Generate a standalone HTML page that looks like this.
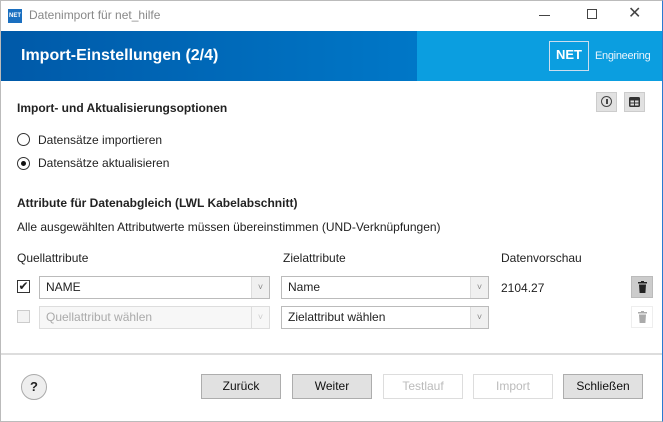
<!DOCTYPE html><html><head><meta charset="utf-8"><style>
*{box-sizing:border-box;margin:0;padding:0}
body{width:663px;height:422px;overflow:hidden;background:#fff;font-family:"Liberation Sans",sans-serif;font-size:12px;color:#222;position:relative}
.a{position:absolute}
.btn{position:absolute;top:374px;width:80px;height:25px;border:1px solid #adadad;background:#e1e1e1;text-align:center;line-height:23px;font-size:12px;color:#111}
.dis{background:#fff;border-color:#ddd;color:#bbb}
.sel{position:absolute;height:23px;border:1px solid #bbb;background:#fff;padding-left:6px;line-height:21px;font-size:12px}
.sel .ar{position:absolute;right:0;top:0;width:18px;height:21px;border-left:1px solid #ddd;background:#f0f0f0;color:#888;font-size:9px;text-align:center;line-height:21px}
</style></head><body>
<div class="a" style="left:0;top:0;width:663px;height:422px;border:1px solid #bbb;border-right:1px solid #2a7ad0"></div>
<div class="a" style="left:8px;top:9px;width:14px;height:14px;background:#1a6fc0;color:#fff;font-size:6px;font-weight:bold;line-height:14px;text-align:center">NET</div>
<div class="a" style="left:29px;top:8px;font-size:12px;color:#888">Datenimport für net_hilfe</div>
<div class="a" style="left:539px;top:15px;width:11px;height:1px;background:#444"></div>
<div class="a" style="left:587px;top:9px;width:10px;height:10px;border:1px solid #444"></div>
<div class="a" style="left:628px;top:3px;font-size:16px;color:#444">✕</div>
<div class="a" style="left:1px;top:31px;width:661px;height:50px;background:linear-gradient(90deg,#0059a8,#0076c6 60%,#0088d4)"></div>
<div class="a" style="left:417px;top:31px;width:245px;height:50px;background:#0b9ee0"></div>
<div class="a" style="left:549px;top:41px;width:40px;height:30px;border:1px solid #cde;color:#fff;font-weight:bold;font-size:13px;text-align:center;line-height:26px">NET</div>
<div class="a" style="left:595px;top:50px;color:#e8f4fc;font-size:11px;letter-spacing:-0.3px">Engineering</div>
<div class="a" style="left:21px;top:47px;color:#fff;font-size:16px;font-weight:bold">Import-Einstellungen (2/4)</div>
<div class="a" style="left:17px;top:101px;font-weight:bold;font-size:12px">Import- und Aktualisierungsoptionen</div>
<div class="a" style="left:596px;top:92px;width:21px;height:20px;background:#e1e1e1;border:1px solid #ccc"><div class="a" style="left:4px;top:3px;width:11px;height:11px;border:1.5px solid #444;border-radius:50%"></div><div class="a" style="left:9px;top:6px;width:1.5px;height:5px;background:#444"></div></div>
<div class="a" style="left:624px;top:92px;width:21px;height:20px;background:#e1e1e1;border:1px solid #ccc"><svg class="a" style="left:4px;top:4px" width="11" height="10"><rect x="0" y="0" width="11" height="10" rx="1.5" fill="#333"/><rect x="1.5" y="3.5" width="3.5" height="2" fill="#ddd"/><rect x="6" y="3.5" width="3.5" height="2" fill="#ddd"/><rect x="1.5" y="6.5" width="3.5" height="2" fill="#ddd"/><rect x="6" y="6.5" width="3.5" height="2" fill="#ddd"/></svg></div>
<div class="a" style="left:17px;top:133px;width:13px;height:13px;border:1px solid #333;border-radius:50%"></div>
<div class="a" style="left:38px;top:133px">Datensätze importieren</div>
<div class="a" style="left:17px;top:157px;width:13px;height:13px;border:1px solid #333;border-radius:50%"><div class="a" style="left:3px;top:3px;width:5px;height:5px;background:#111;border-radius:50%"></div></div>
<div class="a" style="left:38px;top:156px">Datensätze aktualisieren</div>
<div class="a" style="left:17px;top:196px;font-weight:bold">Attribute für Datenabgleich (LWL Kabelabschnitt)</div>
<div class="a" style="left:17px;top:220px">Alle ausgewählten Attributwerte müssen übereinstimmen (UND-Verknüpfungen)</div>
<div class="a" style="left:17px;top:251px">Quellattribute</div>
<div class="a" style="left:283px;top:251px">Zielattribute</div>
<div class="a" style="left:501px;top:251px">Datenvorschau</div>
<div class="a" style="left:17px;top:280px;width:13px;height:13px;border:1px solid #333;font-size:12px;line-height:11px;text-align:center">✔</div>
<div class="sel" style="left:39px;top:276px;width:231px">NAME<div class="ar">˅</div></div>
<div class="sel" style="left:281px;top:276px;width:208px">Name<div class="ar">˅</div></div>
<div class="a" style="left:501px;top:281px">2104.27</div>
<div class="a" style="left:631px;top:276px;width:22px;height:22px;background:#ccc;border:1px solid #bbb"><svg class="a" style="left:6px;top:4px" width="9" height="12"><rect x="0" y="1" width="9" height="1.5" fill="#222"/><rect x="3" y="0" width="3" height="1" fill="#222"/><path d="M1 3.5h7l-0.6 8.5h-5.8z" fill="#222"/></svg></div>
<div class="a" style="left:17px;top:310px;width:13px;height:13px;border:1px solid #ccc;background:#f3f3f3"></div>
<div class="sel" style="left:39px;top:306px;width:231px;color:#aaa;border-color:#ddd;background:#f7f7f7">Quellattribut wählen<div class="ar" style="background:#f7f7f7;color:#ccc">˅</div></div>
<div class="sel" style="left:281px;top:306px;width:208px">Zielattribut wählen<div class="ar">˅</div></div>
<div class="a" style="left:631px;top:306px;width:22px;height:22px;border:1px solid #eee"><svg class="a" style="left:6px;top:4px" width="9" height="12"><rect x="0" y="1" width="9" height="1.5" fill="#aaa"/><rect x="3" y="0" width="3" height="1" fill="#aaa"/><path d="M1 3.5h7l-0.6 8.5h-5.8z" fill="#aaa"/></svg></div>
<div class="a" style="left:1px;top:353px;width:661px;height:2px;background:#ddd"></div>
<div class="a" style="left:21px;top:374px;width:26px;height:26px;border:1px solid #aaa;border-radius:50%;background:#eee;text-align:center;line-height:24px;font-weight:bold;font-size:13px">?</div>
<div class="btn" style="left:201px">Zurück</div>
<div class="btn" style="left:292px">Weiter</div>
<div class="btn dis" style="left:383px">Testlauf</div>
<div class="btn dis" style="left:473px">Import</div>
<div class="btn" style="left:563px">Schließen</div>
</body></html>
